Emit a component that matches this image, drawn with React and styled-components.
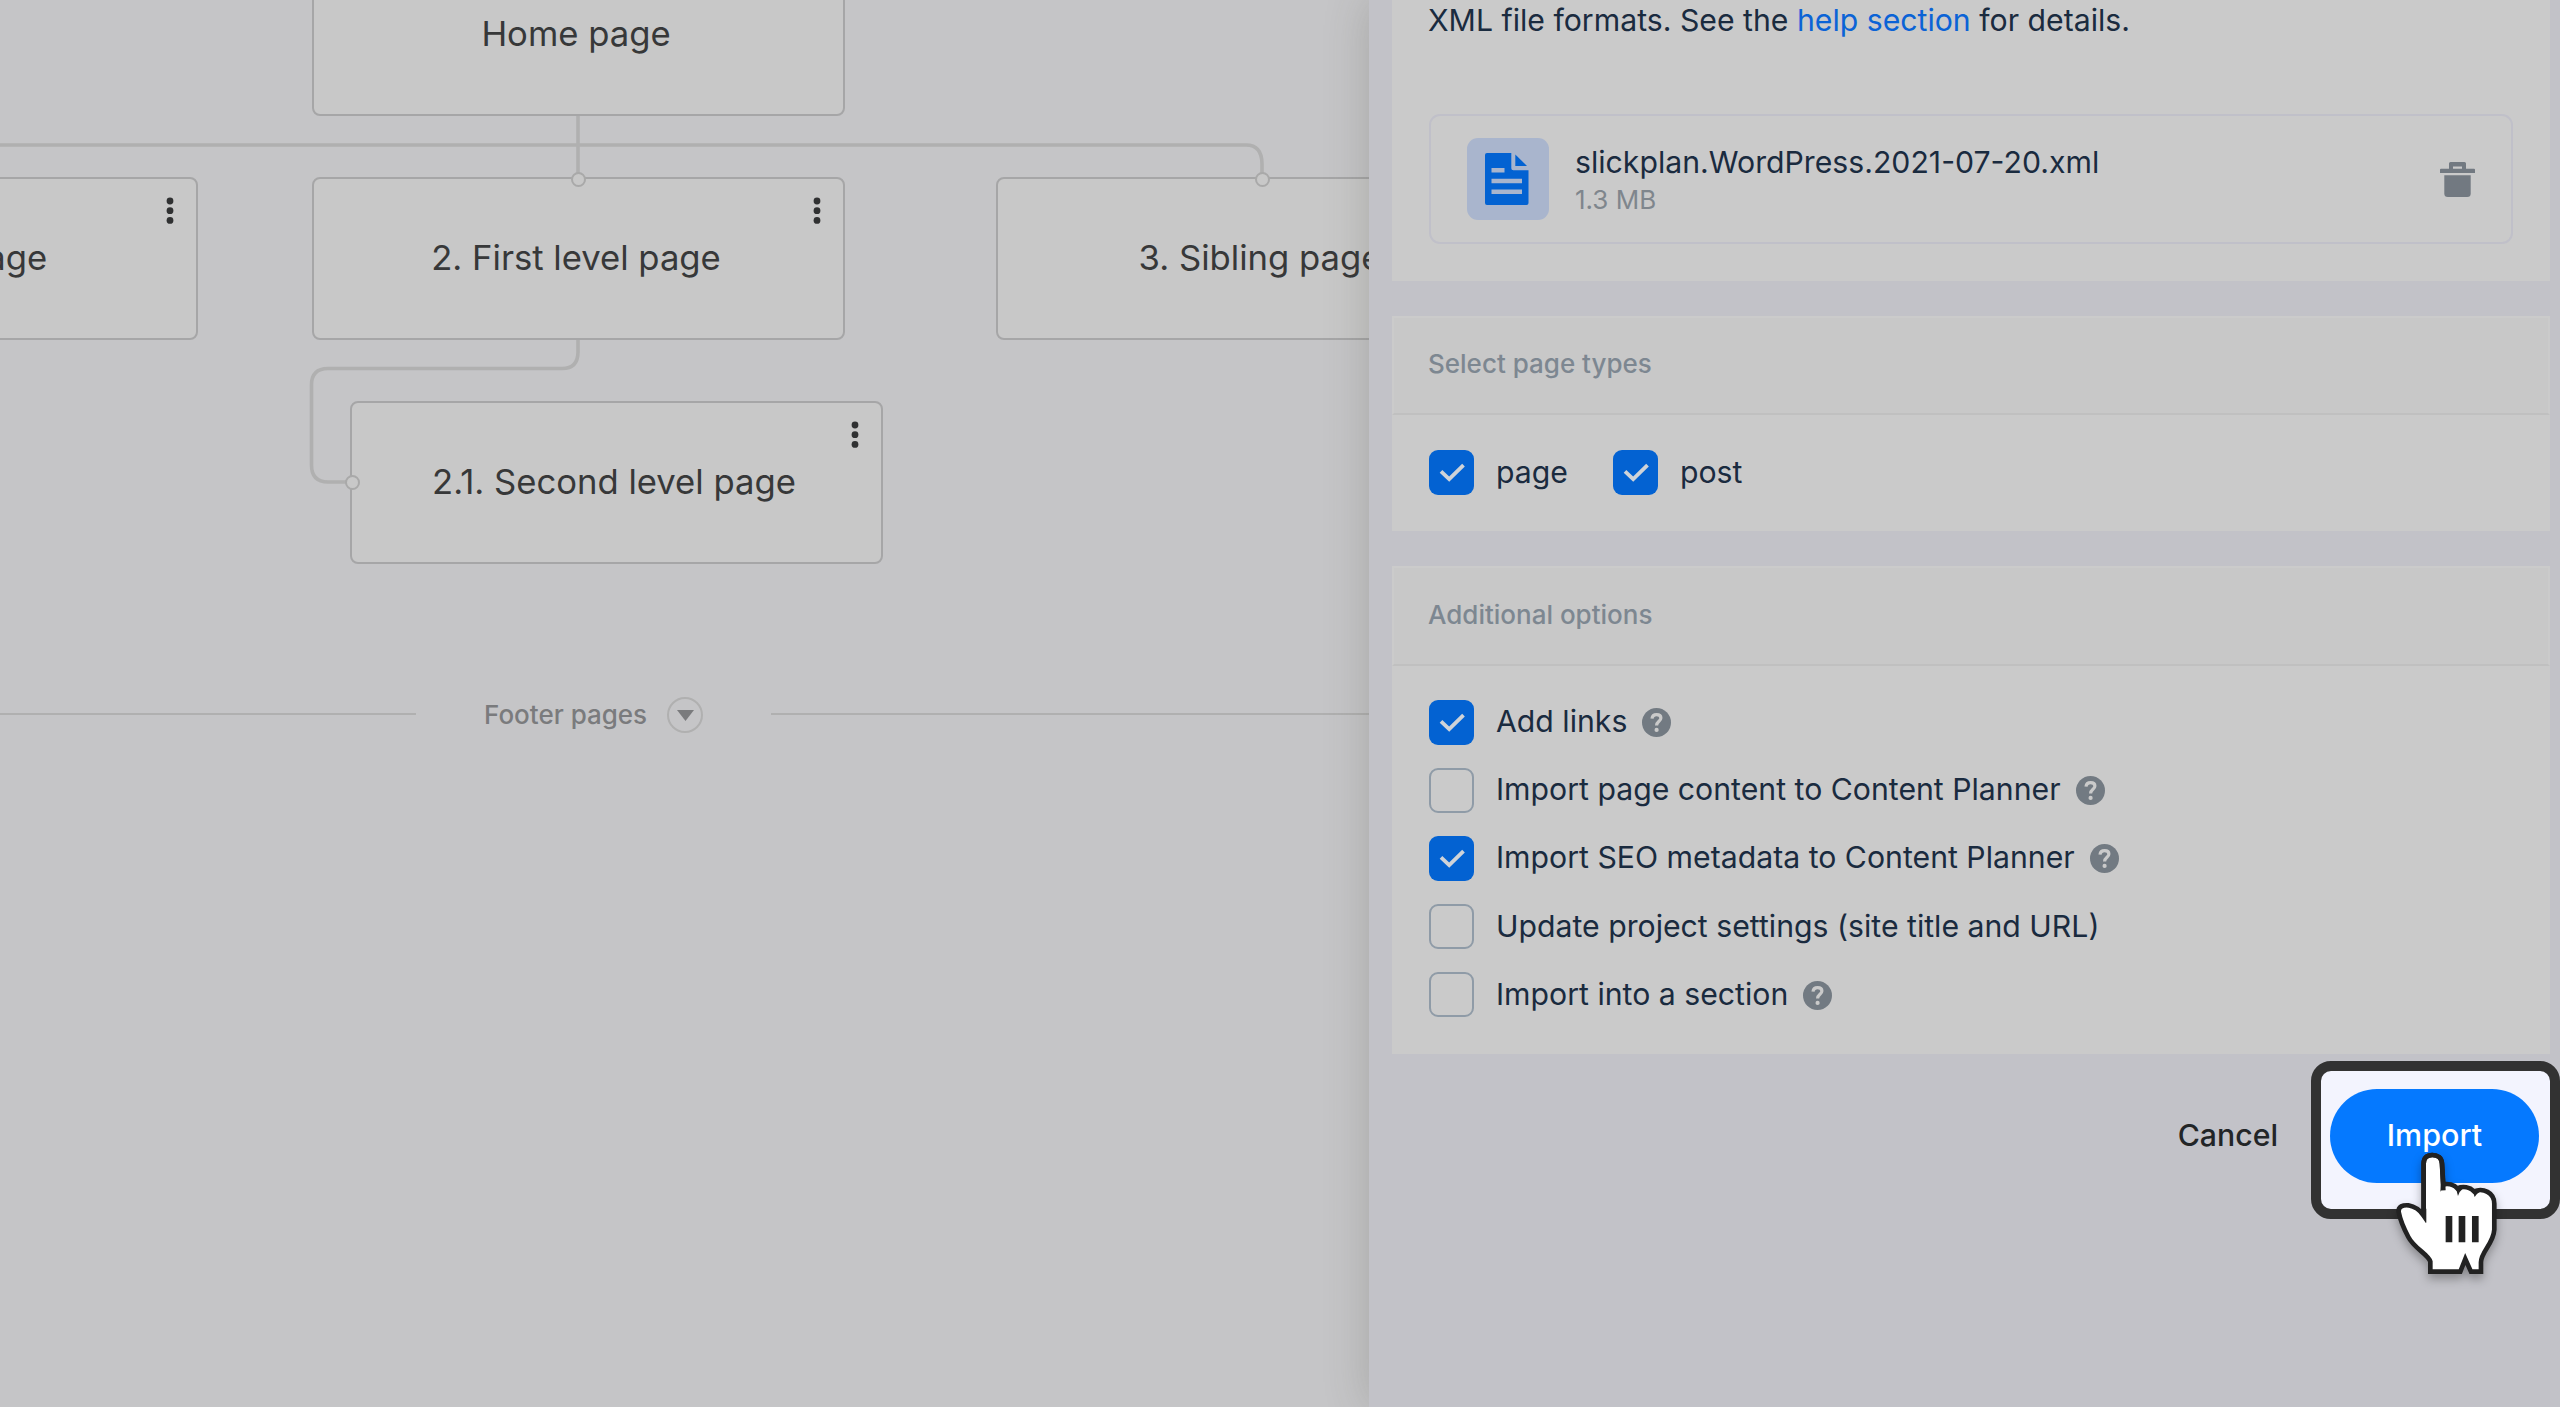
import React from "react"
import styled, { createGlobalStyle } from "styled-components"

const GlobalStyle = createGlobalStyle`
  * {
    box-sizing: border-box;
  }
  body {
    margin: 0;
    font-family: Inter, "Liberation Sans", sans-serif;
    font-optical-sizing: none;
    overflow: hidden;
  }
`

const Page = styled.div`
  display: grid;
  grid-template-columns: 1369px 1191px;
  height: 1407px;
  background: #c5c5c7;
`

/* sitemap canvas */

const Canvas = styled.main`
  position: relative;
  overflow: hidden;
`

const Connectors = styled.svg`
  position: absolute;
  left: 0;
  top: 0;
  fill: none;
  stroke: #b0b0b0;
  stroke-width: 3.6;
`

const Node = styled.div`
  position: absolute;
  left: ${props => props.x}px;
  top: ${props => props.y}px;
  width: 533px;
  height: 163px;
  display: flex;
  align-items: center;
  justify-content: center;
  padding: 0 5px 3px 0;
  background: #c8c8c8;
  border: 2px solid #a6a6a7;
  border-radius: 8px;
  color: #373839;
  font-size: 34.65px;
  line-height: 44px;
  white-space: nowrap;
`

const Dots = styled.svg`
  position: absolute;
  right: 19px;
  top: 16px;
  fill: #303132;
`

const Port = styled.span`
  position: absolute;
  left: ${props => props.x - 7.5}px;
  top: ${props => props.y - 7.5}px;
  width: 15px;
  height: 15px;
  border: 2px solid #a9a9a9;
  border-radius: 50%;
  background: #c8c8c8;
`

const FooterPages = styled.div`
  display: flex;
  align-items: center;
  height: 36px;
  margin-top: 696px;
  color: #7a7b7d;
  font-size: 26px;
  font-weight: 500;
  white-space: nowrap;
`

const Rule = styled.span`
  width: ${props => props.w}px;
  height: 2px;
  margin-top: -1px;
  background: #b0b0b0;
`

const FooterLabel = styled.span`
  width: 183px;
  margin-left: 68px;
`

const Toggle = styled.span`
  display: flex;
  align-items: center;
  justify-content: center;
  width: 36px;
  height: 36px;
  margin-right: 68px;
  margin-top: 2px;
  border: 2px solid #b0b0b0;
  border-radius: 50%;
`

/* import panel */

const Panel = styled.aside`
  position: relative;
  display: flex;
  flex-direction: column;
  gap: 35px;
  padding: 0 10px 0 23px;
  background: #c2c2c8;
  box-shadow: 0 0 42px rgba(70, 70, 60, 0.24);
  color: #1a2b3f;
  font-size: 30.22px;
  line-height: 40px;
  white-space: nowrap;
`

const Card = styled.section`
  background: #cacaca;
`

const FileCard = styled(Card)`
  height: 280.5px;
  padding: 0 37px;
`

const Intro = styled.p`
  margin: 0 0 0 -1px;
  height: 113.5px;
`

const Link = styled.a`
  color: #0b63d6;
`

const FileBox = styled.div`
  display: flex;
  align-items: center;
  height: 130.5px;
  padding: 0 36px;
  border: 2px solid #c0c0c9;
  border-radius: 11px;
`

const FileTile = styled.div`
  display: flex;
  align-items: center;
  justify-content: center;
  width: 82px;
  height: 82px;
  margin-right: 26px;
  padding-right: 2px;
  border-radius: 11px;
  background: #a9b5cd;
`

const FileInfo = styled.div`
  flex: 1;
  padding-top: 2px;
`

const FileSize = styled.div`
  color: #7f868d;
  font-size: 26px;
  line-height: 36px;
`

const TrashIcon = styled.svg`
  margin-top: 2px;
  fill: #727981;
`

const CardTitle = styled.h2`
  display: flex;
  align-items: center;
  margin: 0;
  height: 99.5px;
  padding: 0 34px 2px;
  border: 2px solid #cbcbcb;
  border-bottom-color: #c0c0c0;
  background: #c8c8c8;
  color: #7d8791;
  font-size: 26px;
  font-weight: 500;
`

const Options = styled.div`
  display: flex;
  flex-direction: ${props => (props.row ? "row" : "column")};
  gap: ${props => (props.row ? "45px" : "23.1px")};
  padding: ${props => (props.row ? "35px 37px 36px" : "34.3px 37px 36.4px")};
`

const Option = styled.label`
  display: flex;
  align-items: center;
  height: 45px;
`

const Box = styled.span`
  display: flex;
  align-items: center;
  justify-content: center;
  width: 45px;
  height: 45px;
  margin-right: 22px;
  border: ${props => (props.checked ? 0 : "2px solid #8f9ba7")};
  border-radius: 9px;
  background: ${props => (props.checked ? "#0362d2" : "transparent")};
`

const OptionText = styled.span`
  padding-bottom: 2px;
`

const HelpIcon = styled.svg`
  margin-left: 15px;
  margin-top: 1px;
`

const Actions = styled.div`
  display: flex;
  align-items: center;
  justify-content: flex-end;
  margin: -28px -10px 0 0;
`

const Cancel = styled.button`
  padding: 0 0 10px;
  border: 0;
  background: none;
  color: #222527;
  font: inherit;
  font-weight: 500;
`

const Highlight = styled.div`
  width: 249px;
  height: 158px;
  margin-left: 33px;
  padding: 18px 9px;
  border: 10.5px solid #323232;
  border-radius: 20px;
  background: #f3f4fe;
`

const ImportButton = styled.button`
  width: 209px;
  height: 94px;
  padding: 0 0 1px;
  border: 0;
  border-radius: 47px;
  background: #0579ff;
  color: #fff;
  font: inherit;
  font-size: 30.5px;
  font-weight: 500;
`

const Cursor = styled.svg`
  position: absolute;
  left: 1024px;
  top: 1146.7px;
  overflow: visible;
  filter: drop-shadow(0 5px 5px rgba(0, 0, 0, 0.3));
`

const nodes = [
  { x: 312, y: -47, label: "Home page" },
  { x: -335, y: 177, label: "1. Sibling page" },
  { x: 312, y: 177, label: "2. First level page" },
  { x: 996, y: 177, label: "3. Sibling page" },
  { x: 350, y: 401, label: "2.1. Second level page" },
]

const ports = [
  { x: 578, y: 179 },
  { x: 1262.5, y: 179 },
  { x: 352, y: 482 },
]

const options = [
  { label: "Add links", checked: true, help: true },
  { label: "Import page content to Content Planner", help: true },
  { label: "Import SEO metadata to Content Planner", checked: true, help: true },
  { label: "Update project settings (site title and URL)" },
  { label: "Import into a section", help: true },
]

const Help = () => (
  <HelpIcon width="29" height="29" viewBox="0 0 29 29">
    <circle cx="14.5" cy="14.5" r="14.5" fill="#727a82" />
    <path
      d="M10 10.6 C10.3 7.8 12.2 6.6 14.6 6.6 C17.2 6.6 18.9 8 18.9 10.1 C18.9 13.4 14.6 13.3 14.6 17.6"
      fill="none"
      stroke="#cacaca"
      strokeWidth="3.2"
    />
    <circle cx="14.6" cy="21.9" r="2.1" fill="#cacaca" />
  </HelpIcon>
)

const Check = ({ label, checked, help }) => (
  <Option>
    <Box checked={checked}>
      {checked && (
        <svg width="45" height="45" viewBox="0 0 45 45">
          <path
            d="M12 21.3 L20.2 29.1 L34.5 15.1"
            fill="none"
            stroke="#cfd3d8"
            strokeWidth="3.8"
          />
        </svg>
      )}
    </Box>
    <OptionText>{label}</OptionText>
    {help && <Help />}
  </Option>
)

const App = () => (
  <Page>
    <GlobalStyle />
    <Canvas>
      <Connectors width="1369" height="600">
        <path d="M578 115 V177" />
        <path d="M0 145 H1246 Q1262 145 1262 164 V177" />
        <path d="M578 339 V352 Q578 368.5 562 368.5 H328 Q311.5 368.5 311.5 385 V465 Q311.5 482 328 482 H350" />
      </Connectors>
      {nodes.map(node => (
        <Node key={node.label} x={node.x} y={node.y}>
          {node.label}
          <Dots width="14" height="36" viewBox="0 0 14 36">
            <circle cx="7" cy="6" r="3.4" />
            <circle cx="7" cy="15.7" r="3.4" />
            <circle cx="7" cy="25.4" r="3.4" />
          </Dots>
        </Node>
      ))}
      {ports.map(port => (
        <Port key={port.x} x={port.x} y={port.y} />
      ))}
      <FooterPages>
        <Rule w={416} />
        <FooterLabel>Footer pages</FooterLabel>
        <Toggle>
          <svg width="17" height="11" viewBox="0 0 17 11">
            <path d="M0 0 H17 L8.5 11 Z" fill="#7a7b7d" />
          </svg>
        </Toggle>
        <Rule w={598} />
      </FooterPages>
    </Canvas>
    <Panel>
      <FileCard>
        <Intro>
          XML file formats. See the <Link>help section</Link> for details.
        </Intro>
        <FileBox>
          <FileTile>
            <svg width="44" height="52" viewBox="0 0 44 52">
              <path
                d="M2 0 H26.3 V15.3 Q26.3 17.3 28.3 17.3 H43.5 V50 Q43.5 52 41.5 52 H2 Q0 52 0 50 V2 Q0 0 2 0 Z"
                fill="#0362d2"
              />
              <path d="M30.3 1.5 L42 13 H30.3 Z" fill="#0362d2" />
              <path
                d="M6.5 17.3 H19.5 M6.5 28 H37 M6.5 38.7 H37"
                stroke="#a9b5cd"
                strokeWidth="4.6"
              />
            </svg>
          </FileTile>
          <FileInfo>
            <div>slickplan.WordPress.2021-07-20.xml</div>
            <FileSize>1.3 MB</FileSize>
          </FileInfo>
          <TrashIcon width="35" height="35" viewBox="0 0 35 35">
            <path d="M10.5 0 H24.5 Q26 0 26 1.5 V6.7 H34 Q35 6.7 35 7.7 V11 H0 V7.7 Q0 6.7 1 6.7 H9 V1.5 Q9 0 10.5 0 Z M13 4.4 V6.7 H22 V4.4 Z" />
            <path d="M4.3 13.3 H30.7 V31.5 Q30.7 35 27.2 35 H7.8 Q4.3 35 4.3 31.5 Z" />
          </TrashIcon>
        </FileBox>
      </FileCard>
      <Card>
        <CardTitle>Select page types</CardTitle>
        <Options row>
          <Check label="page" checked />
          <Check label="post" checked />
        </Options>
      </Card>
      <Card>
        <CardTitle>Additional options</CardTitle>
        <Options>
          {options.map(option => (
            <Check key={option.label} {...option} />
          ))}
        </Options>
      </Card>
      <Actions>
        <Cancel>Cancel</Cancel>
        <Highlight>
          <ImportButton>Import</ImportButton>
        </Highlight>
      </Actions>
      <Cursor width="113.3" height="143.3" viewBox="820 350 340 430">
        <path
          d="M932 724 V694 C926 672 884 655 866 620 C850 590 841 566 837 545 C835 528 850 524 866 525 C888 529 902 541 912 556 V400 C912 383 922 374 938 374 C954 374 966 382 967 400 L971 462 C985 459 1003 463 1013 474 C1030 467 1050 470 1063 483 C1090 472 1124 486 1124 520 V598 C1122 640 1084 664 1084 696 V724 H1054 L1037 686 L1022 724 Z"
          fill="#fff"
          stroke="#222"
          strokeWidth="14"
        />
        <path
          d="M912 540 V400 C912 383 922 374 938 374 C954 374 966 382 967 400 L971 480"
          fill="none"
          stroke="#222"
          strokeWidth="14"
        />
        <path
          d="M905 535 L920 578 L920 535 Z M962 485 Q966 474 978 468 L964 462 Z M1008 470 L1015 497 Q1018 484 1028 477 Z M1058 478 L1065 500 Q1068 492 1080 485 Z"
          fill="#222"
        />
        <path
          d="M988 557 V636 M1027 557 V636 M1067 557 V636"
          stroke="#222"
          strokeWidth="20"
        />
      </Cursor>
    </Panel>
  </Page>
)

export default App
